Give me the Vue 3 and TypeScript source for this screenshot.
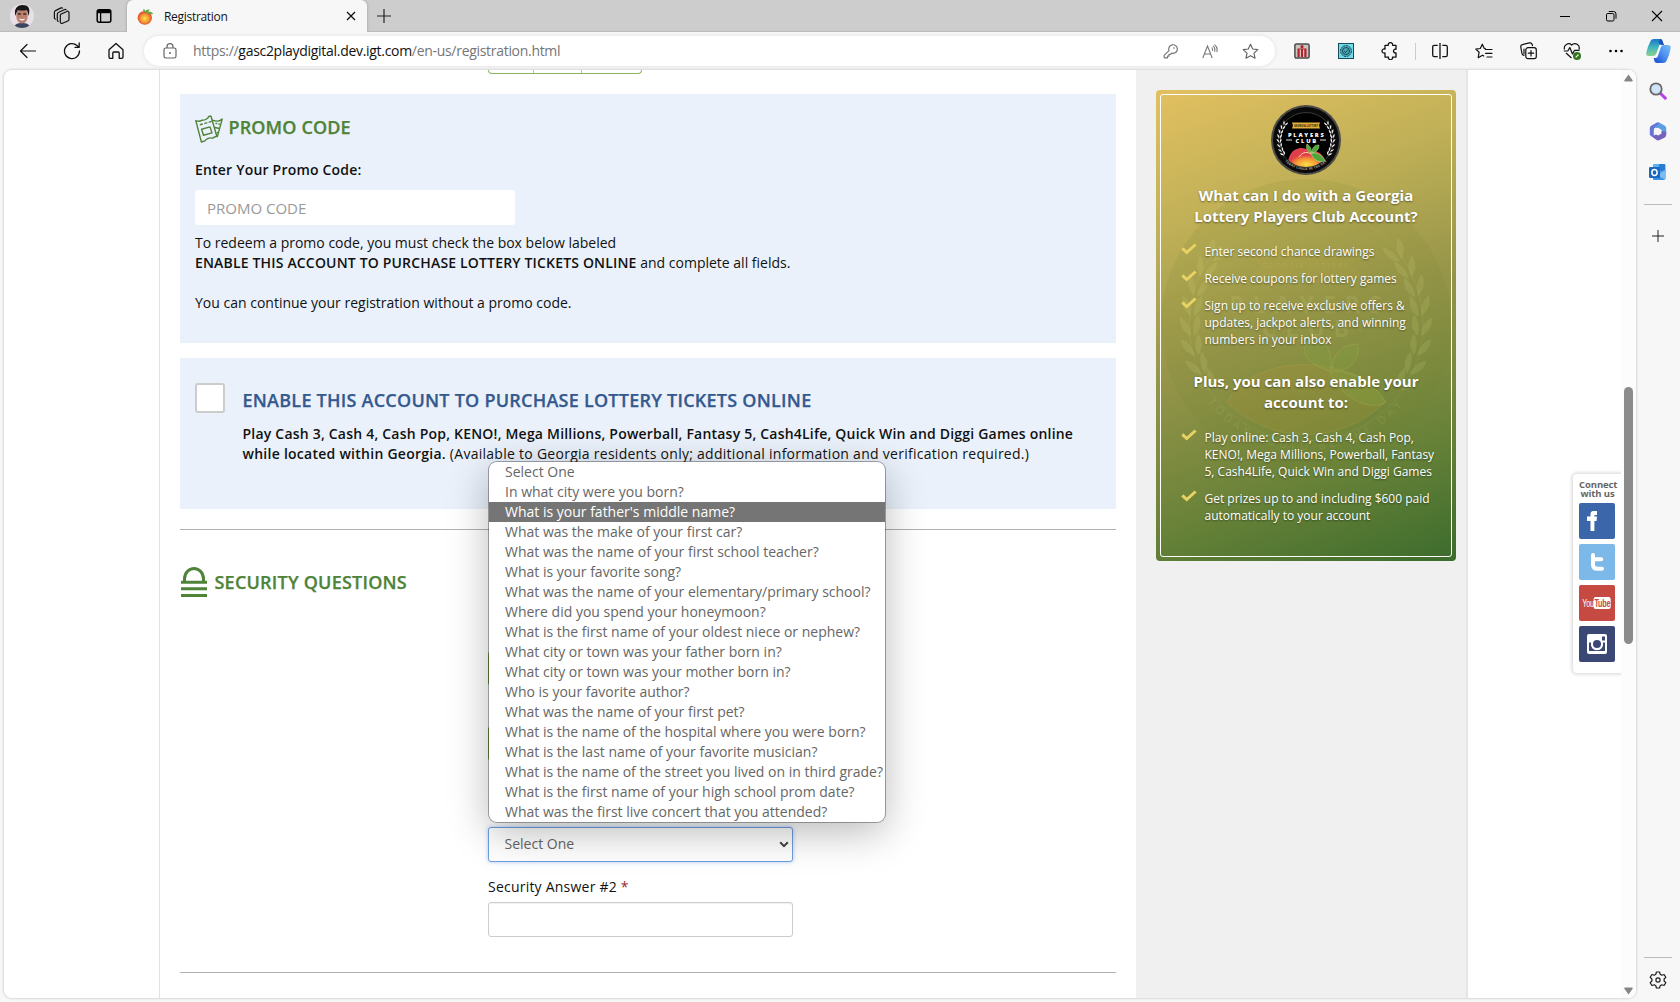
<script setup lang="ts">
const questions: string[] = [
  'Select One',
  'In what city were you born?',
  "What is your father's middle name?",
  'What was the make of your first car?',
  'What was the name of your first school teacher?',
  'What is your favorite song?',
  'What was the name of your elementary/primary school?',
  'Where did you spend your honeymoon?',
  'What is the first name of your oldest niece or nephew?',
  'What city or town was your father born in?',
  'What city or town was your mother born in?',
  'Who is your favorite author?',
  'What was the name of your first pet?',
  'What is the name of the hospital where you were born?',
  'What is the last name of your favorite musician?',
  'What is the name of the street you lived on in third grade?',
  'What is the first name of your high school prom date?',
  'What was the first live concert that you attended?',
]
const highlighted = 2
const benefits: string[][] = [
  ['Enter second chance drawings'],
  ['Receive coupons for lottery games'],
  ['Sign up to receive exclusive offers &', 'updates, jackpot alerts, and winning', 'numbers in your inbox'],
]
const extras: string[][] = [
  ['Play online: Cash 3, Cash 4, Cash Pop,', 'KENO!, Mega Millions, Powerball, Fantasy', '5, Cash4Life, Quick Win and Diggi Games'],
  ['Get prizes up to and including $600 paid', 'automatically to your account'],
]
// Laurel leaves: angle in degrees round the badge centre
const leaves: number[] = [-40, -30, -20, -10, 0, 10, 20, 29]
</script>

<template>
  <div class="window">
    <header class="titlebar">
      <div class="cell avatar-cell">
        <svg width="24" height="24" viewBox="0 0 24 24"><defs><clipPath id="av"><circle cx="12" cy="12" r="12" /></clipPath></defs><g clip-path="url(#av)"><rect width="24" height="24" fill="#e9dfe6" /><path d="M4 24c0-4 4-5 8-5s8 1 8 5z" fill="#3d4660" /><ellipse cx="12" cy="11.500" rx="5.800" ry="8" fill="#b98070" /><path d="M5.500 12C3.500 5 7 1 12.500 1S21 4 18.500 12c-.6-3-1-5-2-6-2 .8-6 .8-8.500 0-1 1-1.700 3-2.500 6z" fill="#17171a" /><path d="M7.800 10h3M13.200 10h3" stroke="#3a2220" stroke-width="1.400" /><path d="M9 14.500c1.800 1 4.200 1 6 0-.6 2.600-5.200 2.600-6 0z" fill="#fff" /></g></svg>
      </div>
      <div class="cell ws-cell">
        <svg width="18" height="18" viewBox="0 0 18 18" fill="none" stroke="#111" stroke-width="1.200" stroke-linejoin="round" stroke-linecap="round"><path d="M7.800 7.300 13.800 4.500a1.400 1.400 0 0 1 2.200 1.200v6.500a2 2 0 0 1-1.200 1.800l-5.300 2.300A1.500 1.500 0 0 1 7.300 15V8.500q0-.8.500-1.200z" /><path d="M5.200 14.300c-.7-.2-.9-.8-.9-1.400V7.300c0-.8.400-1.400 1.100-1.800l6.300-3c.5-.2 1-.1 1.400.2" /><path d="M2.300 12.200c-.7-.2-.9-.8-.9-1.400V5.400c0-.8.400-1.400 1.100-1.800l5.500-2.700c.5-.2 1-.1 1.400.2" /></svg>
      </div>
      <div class="cell ws-cell">
        <svg width="16" height="16" viewBox="0 0 16 16"><rect x="1.200" y="1.700" width="13.600" height="12.600" rx="2" fill="none" stroke="#000" stroke-width="1.500" /><path d="M1.500 2h13v3.200h-13z" /><path d="M4.600 5v9" stroke="#000" stroke-width="1.300" /></svg>
      </div>
      <div class="tab">
        <svg class="favicon" width="17" height="17" viewBox="0 0 17 17"><defs><radialGradient id="pc" cx=".5" cy=".55"><stop offset="0" stop-color="#ffe04d" /><stop offset=".55" stop-color="#f59a35" /><stop offset="1" stop-color="#dc4a34" /></radialGradient></defs><ellipse cx="7.800" cy="9.800" rx="7.200" ry="6.900" fill="url(#pc)" /><path d="M8 4.300c1-3 3-3 4.500-2.600C12 4 10 5 8 4.300zM8 4.300C6 4 6 1.700 6.600.8 8 1.500 8.600 3 8 4.300zM10 4.500c2-1.200 4.500-.8 6.200 1-2.400 1.500-5 .9-6.200-1z" fill="#63a744" /></svg>
        <span class="tab-title">Registration</span>
        <svg class="tab-close" width="10" height="10" viewBox="0 0 10 10"><path d="m1 1 8 8M9 1 1 9" stroke="#111" stroke-width="1.300" /></svg>
      </div>
      <svg class="new-tab" width="14" height="14" viewBox="0 0 14 14"><path d="M7 0v14M0 7h14" stroke="#222" stroke-width="1.200" /></svg>
      <div class="win-controls">
        <span class="cell win"><svg width="12" height="12" viewBox="0 0 12 12"><path d="M1 6.500h10" stroke="#000" /></svg></span>
        <span class="cell win"><svg width="12" height="12" viewBox="0 0 12 12" fill="none" stroke="#000"><rect x="1.500" y="3.500" width="7.500" height="7.500" rx="1.300" /><path d="M3.800 1.500h4.700a2.500 2.500 0 0 1 2.500 2.500v4.700" /></svg></span>
        <span class="cell win"><svg width="12" height="12" viewBox="0 0 12 12"><path d="m1 1 10 10M11 1 1 11" stroke="#000" stroke-width="1.100" /></svg></span>
      </div>
    </header>

    <div class="toolbar">
      <span class="cell nav"><svg width="18" height="18" viewBox="0 0 18 18" fill="none" stroke="#111" stroke-width="1.200" stroke-linecap="round" stroke-linejoin="round"><path d="M16.500 9H1.500M8 2.500 1.500 9 8 15.500" /></svg></span>
      <span class="cell nav"><svg width="18" height="18" viewBox="0 0 18 18" fill="none" stroke="#111" stroke-width="1.300" stroke-linecap="round" stroke-linejoin="round"><path d="M16.500 9A7.500 7.500 0 1 1 14 3.500l2 1.700M16.200 1v4.300H12" /></svg></span>
      <span class="cell nav"><svg width="18" height="18" viewBox="0 0 18 18" fill="none" stroke="#111" stroke-width="1.300" stroke-linejoin="round"><path d="M2 7.700 9 1.500l7 6.200V15a1.300 1.300 0 0 1-1.300 1.300h-2.500V11a1 1 0 0 0-1-1H6.800a1 1 0 0 0-1 1v5.300H3.300A1.300 1.300 0 0 1 2 15z" /></svg></span>
      <div class="address">
        <svg class="lock" width="14" height="16" viewBox="0 0 14 16" fill="none" stroke="#666" stroke-width="1.200"><rect x="1" y="5" width="12" height="10" rx="1.800" /><path d="M4 5V3.700a3 3 0 0 1 6 0V5" /><circle cx="7" cy="10" r="1" fill="#666" stroke="none" /></svg>
        <span class="url">https://<b>gasc2playdigital.dev.igt.com</b>/en-us/registration.html</span>
        <span class="cell addr-icon"><svg width="15" height="15" viewBox="0 0 15 15" fill="none" stroke="#777" stroke-width="1.200" stroke-linejoin="round"><path d="M6 6.600a4.300 4.300 0 1 1 2.800 2.600L7.600 10.400H6v1.700H4.500v1.700H1.200v-2.400z" /><circle cx="11" cy="4" r=".8" fill="#777" stroke="none" /></svg></span>
        <span class="cell addr-icon"><svg width="16" height="15" viewBox="0 0 16 15" fill="none" stroke="#777" stroke-width="1.100"><path d="M.8 14 5.500 2l4.700 12M2.500 10h6M9.700 3.500c.8.900 1 2.200.7 3.300M11 1.800c1.900 1.600 2.300 3.700 1.500 6M12.500.6c2.600 2 3.100 4.600 2.300 7.400" /></svg></span>
        <span class="cell addr-icon"><svg width="17" height="17" viewBox="0 0 17 17" fill="none" stroke="#666" stroke-width="1.200" stroke-linejoin="round"><path d="m8.500 1.300 2.200 4.700 5.100.6-3.800 3.500 1 5.100-4.500-2.500L4 15.200l1-5.100L1.200 6.600 6.300 6z" /></svg></span>
      </div>
      <div class="tools">
        <span class="cell tool"><svg width="16" height="16" viewBox="0 0 16 16"><rect x=".9" y=".9" width="14.200" height="14.200" rx="1.500" fill="#c8c5bd" stroke="#4c4c4c" stroke-width="1.500" /><path d="M3.500 5.500h9V14h-9z" fill="#b3212d" /><path d="M5.700 6.500H7V14H5.700zM9 6.500h1.300V14H9z" fill="#d8c9c4" /><circle cx="8" cy="3.700" r="1.600" fill="#b3212d" /></svg></span>
        <span class="cell tool"><svg width="16" height="16" viewBox="0 0 16 16"><rect x=".5" y=".5" width="15" height="15" fill="#74dbe6" stroke="#164d59" /><circle cx="8" cy="8" r="5.500" fill="#4ba6b5" stroke="#174d5c" stroke-dasharray="2 .8" /><circle cx="8" cy="8" r="3.500" fill="none" stroke="#174d5c" /><path d="m6 8 1.500 1.500L10.200 6.600" fill="none" stroke="#174d5c" /></svg></span>
        <span class="cell tool"><svg width="18" height="18" viewBox="0 0 18 18" fill="none" stroke="#111" stroke-width="1.300" stroke-linejoin="round"><path d="M4 3.300h3.300a2.200 2.200 0 1 1 4.300 0H15v4a1.900 1.900 0 1 0 0 3.600v4.200h-3.500a2.100 2.100 0 1 1-4 0H4v-4.200a2.100 2.100 0 1 1 0-3.800z" /></svg></span>
        <i class="tool-sep"></i>
        <span class="cell tool"><svg width="16" height="16" viewBox="0 0 16 16" fill="none" stroke="#111" stroke-width="1.300"><path d="M5.700 2.300H2.300A1.600 1.600 0 0 0 .7 3.900v8.200a1.600 1.600 0 0 0 1.600 1.600h3.400M10.300 2.300h3.400a1.600 1.600 0 0 1 1.600 1.600v8.200a1.600 1.600 0 0 1-1.600 1.600h-3.400M8 0v16" /></svg></span>
        <span class="cell tool"><svg width="18" height="17" viewBox="0 0 18 17" fill="none" stroke="#111" stroke-width="1.200" stroke-linejoin="round" stroke-linecap="round"><path d="M10.300 5.700 9.300 5.500 7.300 1.200l-2 4.300-4.500.6 3.300 3.100-.9 5.500 4.300-2.500 1.300.8M10.500 6.500H17M10.500 10.300H17M12 14h5" /></svg></span>
        <span class="cell tool"><svg width="17" height="18" viewBox="0 0 17 18" fill="none" stroke="#111" stroke-width="1.200" stroke-linecap="round"><rect x="5.800" y="5.700" width="10.500" height="11" rx="2.200" /><path d="M11 8.500v5.400M8.300 11.200h5.400M4 13.500C2.800 13.200 2.200 12.600 2 11.600L.8 5.100c-.2-1.300.5-2.300 1.700-2.500l6.900-1.700c1.300-.3 2.400.3 2.800 1.600l.3 1.100M4 12V7" /></svg></span>
        <span class="cell tool"><svg width="18" height="18" viewBox="0 0 18 18" fill="none" stroke="#111" stroke-width="1.200" stroke-linejoin="round"><path d="M1.500 7.500A4.400 4.400 0 0 1 8.700 3 4.400 4.400 0 0 1 16 7.500M3 11l5.500 5M.8 9h4l2-3.500L9.500 12l2-3.700h5" /><circle cx="14" cy="14" r="4" fill="#35751f" stroke="none" /><path d="m12.700 15.400 2.800-2.800" stroke="#fff" /></svg></span>
        <span class="cell tool"><svg width="16" height="4" viewBox="0 0 16 4"><circle cx="2.500" cy="2" r="1.300" /><circle cx="8" cy="2" r="1.300" /><circle cx="13.500" cy="2" r="1.300" /></svg></span>
      </div>
      <svg class="copilot" width="25" height="24" viewBox="0 0 25 24"><defs><linearGradient id="cp1" x1="0" y1="0" x2="0" y2="1"><stop offset="0" stop-color="#1b78c8" /><stop offset=".5" stop-color="#42b6bd" /><stop offset="1" stop-color="#8cd38c" /></linearGradient><linearGradient id="cp2" x1="1" y1="0" x2="0" y2="1"><stop offset="0" stop-color="#7ac2f4" /><stop offset=".5" stop-color="#4c8df0" /><stop offset="1" stop-color="#1649cc" /></linearGradient></defs><path d="M4.500 2Q5.200 0 8 0h6q2 0 2.600 2L17.300 5h-2q-1.700 0-2.200 2l-3 8q-.8 2-3 2H3.200Q-.3 17 .3 13.500 1.500 8 4.500 2z" fill="url(#cp1)" /><path d="M20.500 22q-.7 2-3.500 2h-6q-2 0-2.600-2L7.700 19h2q1.700 0 2.200-2l3-9q.8-2 3-2h3.900q3.500 0 2.900 3.500Q23.500 16 20.500 22z" fill="url(#cp2)" /><path d="M14 0q2.100 0 2.600 2L18 6h-3l-2.500-2z" fill="#1d51bd" /></svg>
    </div>

    <div class="body">
      <main class="viewport">
        <div class="page">
          <section class="main-col">
            <div class="segment"><i></i><i></i><i></i></div>

            <div class="box promo">
              <h2 class="head green">
                <svg width="28" height="28" viewBox="0 0 28 28" fill="none" stroke="#4e8338" stroke-width="1.400" stroke-linejoin="round"><path d="M.8 5.600c2 1 4.500.8 6.300-.4 2.500 0 5.600-1.400 6.900-4 1 0 1.400.1 2 0l5.800 20c-2 .4-3.500 1.200-4 2-3-1-6.800.6-7.800 2.600L6.400 27z" /><path d="m16.800 5.300 3.700.6c1.700.5 4.600-.2 6.700-1.800l-5 18M6.600 14.200l8.400-2.300 2 6-8.500 2.300z" /><path d="m4.800 9.800 3-.8m1.500-.4 3-.9m1.400-.4 3-.9M20.500 8.200l1.800.4m1 .3 1.500.3M20 12.500l4.500 1M21.700 17.500l1.800.4" /></svg>
                <span>PROMO CODE</span>
              </h2>
              <div class="promo-label">Enter Your Promo Code:</div>
              <input class="promo-input" type="text" placeholder="PROMO CODE" />
              <p class="para p1">To redeem a promo code, you must check the box below labeled</p>
              <p class="para"><b>ENABLE THIS ACCOUNT TO PURCHASE LOTTERY TICKETS ONLINE</b> and complete all fields.</p>
              <p class="para p3">You can continue your registration without a promo code.</p>
            </div>

            <div class="box enable">
              <span class="checkbox"></span>
              <div class="enable-text">
                <h2 class="blue">ENABLE THIS ACCOUNT TO PURCHASE LOTTERY TICKETS ONLINE</h2>
                <p class="para"><b>Play Cash 3, Cash 4, Cash Pop, KENO!, Mega Millions, Powerball, Fantasy 5, Cash4Life, Quick Win and Diggi Games online</b></p>
                <p class="para wide"><b>while located within Georgia.</b> (Available to Georgia residents only; additional information and verification required.)</p>
              </div>
            </div>

            <hr class="rule r1" />

            <h2 class="head green sec">
              <svg width="26" height="30" viewBox="0 0 26 30" fill="none" stroke="#4e8338"><path d="M3.500 14.500V12a9.500 10.500 0 0 1 19 0v2.500" stroke-width="3" /><path d="M0 15.300h26M0 21.800h26M0 28.500h26" stroke-width="3" /></svg>
              <span>SECURITY QUESTIONS</span>
            </h2>

            <div class="fields">
              <div class="flabel"></div>
              <div class="control ok"></div>
              <div class="flabel"></div>
              <div class="control ok"></div>
              <div class="flabel gap"></div>
              <div class="select-wrap">
                <div class="control select"><span>Select One</span><svg width="10" height="7" viewBox="0 0 10 7"><path d="m1.200 1.300 3.800 3.800 3.800-3.800" fill="none" stroke="#444" stroke-width="2" /></svg></div>
                <ul class="dropdown">
                  <li v-for="(q, i) in questions" :key="q" :class="{ on: i === highlighted }">{{ q }}</li>
                </ul>
              </div>
              <label class="flabel last">Security Answer #2 <em>*</em></label>
              <div class="control"></div>
            </div>
            <hr class="rule r2" />
          </section>

          <aside class="side-col">
            <div class="card">
              <svg class="watermark" width="300" height="300" viewBox="-150 -150 300 300">
                <circle r="145" fill="#77862f" fill-opacity=".13" />
                <circle r="117" fill="none" stroke="#fff" stroke-opacity=".06" />
                <path d="M-56-70H56l-10 11 10 11H-56l10-11z" fill="#c0a43d" fill-opacity=".13" />
                <path d="M-79 78C-52 28 50 28 79 78A112 112 0 0 1-79 78z" fill="#c29434" fill-opacity=".16" stroke="#d0b050" stroke-opacity=".2" />
                <path d="M24 47C-12 36-2 18 8 14 22 18 28 30 24 47zM26 46C26 28 38 20 52 20 54 36 42 50 26 46zM24 48C50 46 66 58 80 78 66 88 36 76 24 48z" fill="#7fa33f" fill-opacity=".3" stroke="#b8cd66" stroke-opacity=".22" />
                <g v-for="a in leaves" :key="a" fill="#dce08a" fill-opacity=".14">
                  <path :transform="`rotate(${a}) translate(112 0)`" d="M0 12q-10-9-4-22Q3 0 0 12zM3 12q0-13 11-19 1 13-11 19z" />
                  <path :transform="`scale(-1 1) rotate(${a}) translate(112 0)`" d="M0 12q-10-9-4-22Q3 0 0 12zM3 12q0-13 11-19 1 13-11 19z" />
                </g>
                <g class="wm-text" text-anchor="middle"><text y="-56" font-size="8" letter-spacing="1.200">GEORGIA LOTTERY</text><text x="4" y="-11" font-size="23" font-weight="700" letter-spacing="9">PLAYERS</text><text x="4" y="13" font-size="23" font-weight="700" letter-spacing="9">CLUB</text>
                  <defs><path id="arc" d="M-126 0A126 126 0 0 0 126 0" /></defs><text font-size="11" letter-spacing="4"><textPath href="#arc" startOffset="50%">TODAY COULD BE THE DAY</textPath></text>
                </g>
              </svg>
              <div class="card-inner">
                <svg class="badge" width="70" height="70" viewBox="-35 -35 70 70">
                  <defs><radialGradient id="fr" cy=".85"><stop offset="0" stop-color="#ffe04a" /><stop offset=".6" stop-color="#f49535" /><stop offset="1" stop-color="#df3e4c" /></radialGradient><clipPath id="fc"><circle r="27" /></clipPath></defs>
                  <circle r="35" fill="#4b4a48" /><circle r="33" fill="#0a0a0a" /><circle r="27.500" fill="#000" stroke="#3a3a3a" />
                  <path d="M-14-17.500h28l-1 3 1 3h-28l1-3z" fill="#e2b23c" />
                  <g class="badge-text" text-anchor="middle" fill="#fff"><text y="-13.500" font-size="2.600" fill="#4a3510">GEORGIA LOTTERY</text><text x=".7" y="-3" font-size="5.800" letter-spacing="1.700">PLAYERS</text><text x=".7" y="3" font-size="5.800" letter-spacing="1.700">CLUB</text><path id="arc2" d="M-30 0A30 30 0 0 0 30 0" fill="none" /><text font-size="3" letter-spacing=".3" fill="#999"><textPath href="#arc2" startOffset="50%">TODAY COULD BE THE DAY</textPath></text></g>
                  <path d="M-20 0h6M14 0h6" stroke="#ddd" />
                  <g clip-path="url(#fc)"><path d="M-18 23C-17 8-4 5 4 11c8-1 13 4 15 9L10 26C4 28-6 28-11 26z" fill="url(#fr)" /></g>
                  <path d="M-7 17C-3 11 2 12 5 14" fill="none" stroke="#ffd9a0" />
                  <path d="M5 13C0 11 0 6 1 4c3 2 5 5 4 9zm1 0c0-5 2-8 7-8 0 4-2 7-7 8zm-1 0c7-1 12 3 14 8-6 2-12-1-14-8z" fill="#4ea63b" stroke="#c7e8a0" stroke-width=".5" />
                  <g v-for="a in leaves" :key="a" fill="#eee"><path :transform="`rotate(${a + 2}) translate(26 0)`" d="M0 2Q-2.500 0-1-3 .5-1 0 2zm.5 0Q.5-1 3.500-2 3 1 .5 2z" /><path :transform="`scale(-1 1) rotate(${a + 2}) translate(26 0)`" d="M0 2Q-2.500 0-1-3 .5-1 0 2zm.5 0Q.5-1 3.500-2 3 1 .5 2z" /></g>
                </svg>
                <h3 class="h-first">What can I do with a Georgia<br />Lottery Players Club Account?</h3>
                <ul class="perks">
                  <li v-for="p in benefits" :key="p[0]"><svg width="16" height="12" viewBox="0 0 16 12"><path d="m1.300 5.300 4.400 4.200L14.600 1.500" fill="none" stroke="#e8d264" stroke-width="3" /></svg><div><span v-for="l in p" :key="l">{{ l }}</span></div></li>
                </ul>
                <h3 class="h-second">Plus, you can also enable your<br />account to:</h3>
                <ul class="perks">
                  <li v-for="p in extras" :key="p[0]"><svg width="16" height="12" viewBox="0 0 16 12"><path d="m1.300 5.300 4.400 4.200L14.600 1.500" fill="none" stroke="#e8d264" stroke-width="3" /></svg><div><span v-for="l in p" :key="l">{{ l }}</span></div></li>
                </ul>
              </div>
            </div>
          </aside>
        </div>

        <div class="social">
          <div class="social-title">Connect<br />with us</div>
          <span class="soc fb"><svg width="36" height="36" viewBox="0 0 36 36"><path d="M11.500 28V18H8v-4.500h3.500v-2.300C11.500 8.500 13.300 8 15.500 8H18v4h-1.700c-.8 0-.9.300-.9 1v.5H18l-.4 4.500h-2.200v10z" fill="#fff" /></svg></span>
          <span class="soc tw"><svg width="36" height="36" viewBox="0 0 36 36"><path d="M14 11v9.500c0 2.800 1.500 4.300 4.300 4.300H23M14 15.200h8.300" fill="none" stroke="#fff" stroke-width="4" stroke-linecap="round" /></svg></span>
          <span class="soc yt"><span class="yt-logo">You<b>Tube</b></span></span>
          <span class="soc ig"><svg width="36" height="36" viewBox="0 0 36 36"><path fill-rule="evenodd" d="M10 8h16a2 2 0 0 1 2 2v16a2 2 0 0 1-2 2H10a2 2 0 0 1-2-2V10a2 2 0 0 1 2-2zm13 2.500v4h3v-4zM10 16.500V25h16v-8.500h-2.300a6 6 0 1 1-11.400 0z" fill="#fff" /><circle cx="18" cy="18" r="6" fill="#fff" /><circle cx="18" cy="18" r="4" fill="#3b4876" /></svg></span>
        </div>

        <div class="scrollbar">
          <svg width="9" height="8" viewBox="0 0 9 8"><path d="M4.500.5 8.800 6.500q0 1-1 1H1.200q-1 0-1-1z" fill="#858585" /></svg>
          <i class="thumb"></i>
          <svg class="down" width="9" height="8" viewBox="0 0 9 8"><path d="M4.500 7.500.2 1.500q0-1 1-1h6.600q1 0 1 1z" fill="#858585" /></svg>
        </div>
      </main>

      <nav class="edge-side">
        <svg class="e1" width="18" height="18" viewBox="0 0 18 18"><path d="m11.500 11.500 4.800 4.600" stroke="#b83fe8" stroke-width="3" stroke-linecap="round" /><circle cx="7" cy="7" r="5.700" fill="#cfe4f8" stroke="#686868" stroke-width="1.800" /></svg>
        <svg class="e2" width="18" height="19" viewBox="0 0 18 19"><path d="M8 .6 2.500 3.500A3 3 0 0 0 .8 6v7l4 2.300V8c0-1.300.5-2 1.500-2.600L12 2.500 10.500.7a3 3 0 0 0-2.500-.1z" fill="#6575d8" /><path d="m10.500.7 5 2.900A3 3 0 0 1 17.200 6v7l-4.500-2.400V8.500L9 6.200 6 5.500z" fill="#5b9fe2" /><path d="m17.200 9.500v3.600a3 3 0 0 1-1.700 2.600L10.500 18a3 3 0 0 1-3 0L.9 13c1.500 1 3 1 4.500.2l7.300-4z" fill="#7563bd" /><path d="m9 5.800 3.400 2v4L9 13.500l-3.400-1.700v-4z" fill="#f7f7f7" /></svg>
        <svg class="e3" width="17" height="18" viewBox="0 0 17 18"><path d="M5 1h10a1.300 1.300 0 0 1 1.300 1.300V10H4V2a1 1 0 0 1 1-1z" fill="#59b2ef" /><path d="M10 1h5.200q1 0 1 1v6H10z" fill="#2b7dd4" /><path d="m4 10 7-1 5.500-2.500V15a2 2 0 0 1-2 2H5a1 1 0 0 1-1-1z" fill="#3b91e3" /><path d="m8 12.500 8.500-6V15q0 1-.6 1.500z" fill="#7cbcf0" /><rect y="4" width="11" height="11" rx="1.200" fill="#1868c4" /><ellipse cx="5.500" cy="9.500" rx="2.600" ry="3" fill="none" stroke="#fff" stroke-width="1.500" /></svg>
        <i class="e-line"></i>
        <svg class="e4" width="12" height="12" viewBox="0 0 12 12"><path d="M6 0v12M0 6h12" stroke="#222" /></svg>
        <span class="grow"></span>
        <i class="e-line low"></i>
        <svg class="gear" width="18" height="18" viewBox="0 0 18 18" fill="none" stroke="#1c1c1c" stroke-width="1.200" stroke-linejoin="round"><path d="M7.400 1h3.200l.6 2.300 1.600.9 2.300-.7 1.700 2.800-1.700 1.700v2l1.700 1.700-1.700 2.800-2.300-.7-1.600.9-.6 2.300H7.400l-.6-2.300-1.600-.9-2.300.7-1.700-2.800L2.900 10V8L1.200 6.300l1.700-2.800 2.300.7 1.600-.9z" /><circle cx="9" cy="9" r="2.100" /></svg>
      </nav>
    </div>
  </div>
</template>

<style>
body { margin: 0; overflow: hidden; }
</style>

<style scoped>
* { box-sizing: border-box; }
.window { width: 1680px; height: 1002px; background: #f7f7f7; font-family: "Open Sans", sans-serif; display: flex; flex-direction: column; overflow: hidden; color: #111; }
h2, h3, p, ul { margin: 0; padding: 0; list-style: none; }
svg { display: block; flex: none; }
.cell { display: flex; align-items: center; justify-content: center; flex: none; }

.titlebar { height: 32px; background: #cdcdcd; display: flex; align-items: center; flex: none; box-shadow: inset 0 -2px 1px -1px #bbb; }
.avatar-cell { width: 41px; padding-left: 3px; }
.ws-cell { width: 42px; }
.tab { width: 240px; margin-left: 2px; height: 32px; background: #f7f7f7; border-radius: 6px 6px 0 0; display: flex; align-items: center; padding: 0 11px 0 10px; box-shadow: 0 0 3px #999; clip-path: inset(0 -4px 0 -4px); }
.tab-title { font-size: 12px; margin-left: 10px; flex: 1; letter-spacing: -.3px; }
.new-tab { margin-left: 10px; }
.win-controls { margin-left: auto; display: flex; }
.win { width: 46px; }

.toolbar { height: 38px; flex: none; display: flex; align-items: center; padding-left: 6px; }
.nav { width: 44px; }
.address { width: 1131px; height: 30px; margin-left: 6px; background: #fff; border-radius: 15px; display: flex; align-items: center; padding: 0 5px 0 19px; box-shadow: 0 0 4px rgba(0,0,0,.1); flex: none; }
.url { font-size: 14px; margin-left: 16px; flex: 1; color: #767676; white-space: nowrap; letter-spacing: -.3px; line-height: 18px; margin-top: -1px; }
.url b { font-weight: 400; color: #111; }
.addr-icon { width: 40px; }
.tools { display: flex; align-items: center; margin-left: 5px; flex: none; }
.tool { width: 44.200px; }
.tool-sep { width: 1px; height: 17px; background: #ccc; margin: 0 2px; }
.copilot { margin-left: 7px; }

.body { flex: 1; display: flex; min-height: 0; }
.viewport { width: 1632px; height: 928px; margin-left: 4px; background: #fff; border-radius: 8px; box-shadow: 0 0 2px 1px #d8d8d8; position: relative; display: flex; overflow: hidden; flex: none; }
.page { margin-left: 155px; width: 1309px; border-left: 1px solid #e2e2e2; border-right: 2px solid #e5e5e5; display: flex; flex: none; }
.main-col { width: 976px; padding: 0 20px; flex: none; }
.segment { width: 154px; height: 4px; margin-left: 308px; border: 1px solid #87b75f; border-top: 0; border-radius: 0 0 4px 4px; display: flex; }
.segment i:nth-child(1) { width: 45px; border-right: 1px solid #bbb; }
.segment i:nth-child(2) { width: 48px; border-right: 1px solid #bbb; }
.box { background: #eaf1fb; width: 936px; }
.promo { margin-top: 20px; height: 249px; padding: 21px 15px 0; }
.head { display: flex; align-items: center; gap: 5.500px; font-size: 18px; font-weight: 600; height: 28px; line-height: 28px; white-space: nowrap; letter-spacing: .22px; -webkit-text-stroke: .25px currentColor; }
.green { color: #4e8338; }
.head span { position: relative; top: -2px; }
.promo .head { letter-spacing: .12px; }
.promo-label { font-size: 14px; font-weight: 600; line-height: 20px; margin-top: 17px; letter-spacing: .2px; }
.promo-input { display: block; width: 320px; height: 35px; margin-top: 10px; border: 0; border-radius: 3px; padding: 0 12px; background: #fff; font: 15px "Open Sans", sans-serif; }
.promo-input::placeholder { color: #999; opacity: 1; }
.para { font-size: 14px; line-height: 20px; white-space: nowrap; }
.para b { font-weight: 600; letter-spacing: .17px; }
.p1 { margin-top: 8px; }
.p3 { margin-top: 20px; }
.enable { margin-top: 15px; height: 151px; padding: 25px 0 0 15px; display: flex; gap: 17.500px; }
.enable .para b { letter-spacing: .21px; }
.enable .wide { letter-spacing: .27px; }
.enable .wide b { letter-spacing: .26px; }
.checkbox { width: 30px; height: 30px; background: #fff; border: 2px solid #ccc; border-radius: 3px; flex: none; }
.blue { font-size: 18px; font-weight: 600; color: #34598f; line-height: 24px; margin: 5px 0 12px; white-space: nowrap; letter-spacing: .24px; -webkit-text-stroke: .25px currentColor; }
.rule { border: 0; height: 1px; background: #b0b0b0; margin: 0; width: 936px; }
.r1 { margin-top: 20px; }
.sec { margin: 37px 0 0 1px; height: 30px; gap: 7.500px; }
.sec span { top: 0; }
.fields { margin: 28px 0 0 308px; width: 305px; }
.flabel { display: block; font-size: 14px; line-height: 20px; margin-bottom: 6px; height: 20px; white-space: nowrap; letter-spacing: .22px; }
.flabel em { color: #a12622; font-style: normal; }
.control { height: 35px; border: 1px solid #ccc; border-radius: 3px; background: #fff; box-shadow: inset 0 1px 1px rgba(0,0,0,.06); }
.control.ok { border-color: #7fb04f; margin-bottom: 14px; }
.gap { margin-top: 40px; }
.select-wrap { position: relative; }
.select { display: flex; align-items: center; justify-content: space-between; padding: 0 3px 2px 15.500px; font-size: 14px; color: #666; border-color: #6f9ede; box-shadow: 0 0 4px rgba(100,150,230,.5); }
.select svg { margin-top: 2px; }
.dropdown { position: absolute; left: 1px; bottom: 40px; width: 396px; height: 360px; border-radius: 8px; background: #fff; box-shadow: 0 0 0 1px rgba(0,0,0,.32), 0 10px 40px rgba(0,0,0,.28); overflow: hidden; }
.dropdown li { height: 20px; line-height: 20px; padding-left: 16px; font-size: 14px; color: #666; white-space: nowrap; }
.dropdown li.on { background: #757575; color: #fff; }
.last { margin-top: 15px; margin-bottom: 5px; }
.r2 { margin-top: 35px; }

.side-col { flex: 1; background: #f0f0f0; padding: 20px 0 0 20px; }
.card { width: 300px; height: 471px; border-radius: 4px; background: linear-gradient(160deg, #e2c060 0%, #c0b057 25%, #969549 50%, #688238 77%, #3c6c2d 100%); padding: 4px; position: relative; }
.watermark { position: absolute; left: 0; top: 84px; }
.wm-text text { fill: #dce08a; fill-opacity: .15; font-family: "Open Sans", sans-serif; }
.card-inner { position: relative; height: 463px; border: 1px solid #fff; border-radius: 3px; color: #fff; padding-top: 10px; text-shadow: 0 1px 2px rgba(0,0,0,.45); }
.badge { margin: 0 auto; }
.badge-text { font-family: "Open Sans", sans-serif; font-weight: 800; text-shadow: none; }
h3 { font-size: 15px; font-weight: 700; line-height: 21px; text-align: center; white-space: nowrap; }
.h-first { margin-top: 10px; margin-bottom: 16px; }
.h-second { margin-top: 23px; margin-bottom: 15.500px; }
.perks { padding-left: 20px; }
.perks li { display: flex; gap: 7.500px; margin-bottom: 10px; }
.perks span { display: block; font-size: 12px; line-height: 17px; white-space: nowrap; }

.social { position: absolute; left: 1569px; top: 404px; width: 60px; height: 199px; background: #fff; border-radius: 4px; box-shadow: 0 0 3px 2px #e3e3e3; padding: 6px 0 0 6px; display: flex; flex-direction: column; gap: 5px; }
.social-title { width: 37px; text-align: center; font-size: 9.500px; font-weight: 700; line-height: 9px; color: #666; height: 18px; letter-spacing: -.1px; white-space: nowrap; }
.soc { width: 36px; height: 36px; border-radius: 2px; flex: none; }
.fb { background: #3c66aa; }
.tw { background: #7cb9e8; }
.yt { background: #c74a42; color: #fff; display: flex; align-items: center; justify-content: center; font: 400 11px "Liberation Sans", sans-serif; letter-spacing: -.4px; }
.yt-logo { transform: scaleX(.66); white-space: nowrap; }
.yt b { background: #fff; color: #c74a42; border-radius: 3px; padding: 0 1px; line-height: 11px; }
.ig { background: #3b4876; }
.scrollbar { position: absolute; right: 0; top: 0; bottom: 0; width: 15px; background: #fcfcfc; display: flex; flex-direction: column; align-items: center; padding: 4px 0 3px; }
.thumb { width: 9px; height: 257px; margin-top: 305px; border-radius: 5px; background: #8b8b8b; }
.down { margin-top: auto; }

.edge-side { width: 44px; display: flex; flex-direction: column; align-items: center; padding: 0 1px 13px 0; }
.e1 { margin-top: 12px; }
.e2 { margin-top: 22px; }
.e3 { margin-top: 22px; }
.e-line { width: 28px; height: 1px; background: #bbb; margin-top: 23px; }
.e4 { margin-top: 25px; }
.grow { flex: 1; }
.low { margin: 0 0 13px; }
</style>
